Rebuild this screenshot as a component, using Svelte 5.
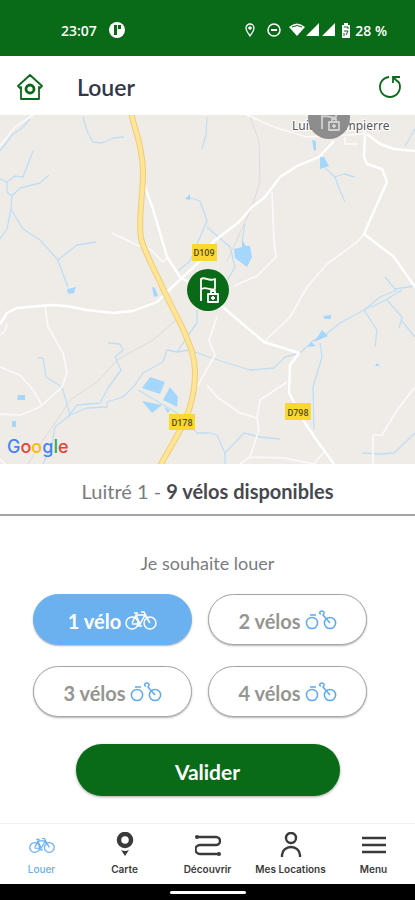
<script>
    let bikes = $state(1);
    let tab = $state("Louer");

    const options = [1, 2, 3, 4];
    const tabs = ["Louer", "Carte", "Découvrir", "Mes Locations", "Menu"];

    const streams = [
        "M30 4L21 14L13 19L0 36",
        "M83 2L87 16L93 27L102 28L113 23L124 22",
        "M33 36L23 62L15 61L7 67L0 64M7 67V77L12 81L20 73L40 68L49 60",
        "M12 81L11 94L23 114L40 125L58 145L60 151L68 172M11 94L7 114L0 124M58 145L77 130L96 127",
        "M207 2L206 20L202 34M188 82L200 86L207 106L197 129L190 146L178 156",
        "M207 112L230 132L235 152L227 166L216 176M245 109L242 127",
        "M324 52L335 62L340 76L345 87M335 62L344 59L355 62M415 14L405 31",
        "M197 195V208L187 222L177 237L167 235L163 247L143 258L135 270L123 282L107 287V292L87 293L70 300L55 312L52 330L43 349",
        "M177 237L190 235L203 240L227 248L250 255L274 253L285 242L300 238L314 225L325 220L340 208L364 195L380 182L397 175",
        "M364 195L382 187L402 175M385 162L395 174L415 171M364 195L377 215L375 232",
        "M387 185L402 202L399 213M402 206L415 222",
        "M320 228L322 242L313 272L314 315",
        "M207 317L217 320L225 338V349M225 338L244 318L260 322L280 324",
        "M415 318L394 338L380 339L362 338",
        "M38 243H43L46 262L62 272L70 300",
        "M108 228L120 229L123 235L115 242L121 255L108 273L100 288L77 290L68 302",
        "M138 275L177 298L197 318H208",
    ];

    const roads = [
        "M0 209L7 198L17 193L50 190L67 191L87 195L113 198L133 196L157 187L167 177L183 162L200 146L214 126L239 107L252 92L265 82L280 62L297 51L319 42L334 26",
        "M145 72L153 94L167 142L180 162L190 168L224 193L264 227L299 238L290 250L289 278L305 308L320 330L334 349",
        "M367 19L380 29L394 34L415 36",
        "M365 5V19L364 42L367 49L382 54L387 67L374 96L364 119L394 142L415 172",
    ];

    const lanes = [
        "M33 0L15 12L0 31",
        "M112 118L137 130L150 134L163 147L168 142",
        "M247 0L274 12L307 22L364 19",
        "M364 119L357 127L327 149L307 172L290 202L264 227",
        "M272 77L274 126L276 142L257 161L234 171",
        "M217 202L209 225L215 240L197 272M207 270L217 282L240 298L257 303",
        "M287 267L260 285L257 303L259 315L250 342L240 349M250 342L284 343L314 349L324 337",
        "M415 272L397 295L382 320H373V349M345 22V29H358",
        "M45 191L48 212L63 238L67 258L62 272L40 292L20 300L0 299",
        "M0 252L20 260L33 275L42 290M0 220L5 216L7 209M0 344L5 349",
    ];
</script>

{#snippet bike()}
    <svg class="bike" viewBox="0 0 32 20" aria-hidden="true">
        <circle cx="7" cy="13" r="6" />
        <circle cx="25" cy="13" r="6" />
        <path d="M7 13L11 5H20L15 14L11 5M15 14H7M25 13L19 2H16M9 3H13M20 5L25 13M13 16H17" />
    </svg>
{/snippet}

{#snippet partialBike()}
    <svg class="bike" viewBox="0 0 32 20" aria-hidden="true">
        <circle cx="7" cy="13" r="5.6" />
        <circle cx="25" cy="13" r="5.6" />
        <path d="M5 5H11M25 13L18 5C20 3 19 1 17 1C14 1 14 4 16 4" />
    </svg>
{/snippet}

{#snippet flag()}
    <path d="M-7 11V-11C-3 -14 0 -8 7 -11V-1C1 1 -2 -4 -6 -1" />
    <path d="M0 4H10V12H0ZM3 4V1H7V4M5 6V10M3 8H7" />
{/snippet}

<div class="app">
    <div class="status">
        <div class="status-group">
            <span>23:07</span>
            <svg width="16" height="16" viewBox="0 0 16 16" aria-hidden="true">
                <circle cx="8" cy="8" r="8" fill="#fff" />
                <path d="M5 3H8V13H5ZM9 3H12V7H9Z" fill="#096a17" />
            </svg>
        </div>
        <div class="status-group icons">
            <svg class="pin" width="10" height="14" viewBox="0 0 10 14" aria-hidden="true">
                <path d="M5 13C3 10 1 8 1 5A4 4 0 0 1 9 5C9 8 7 10 5 13ZM5 3V7M3 5H7" fill="none" stroke="#fff" stroke-width="1.3" />
            </svg>
            <svg class="dnd" width="14" height="14" viewBox="0 0 14 14" aria-hidden="true">
                <circle cx="7" cy="7" r="6" fill="none" stroke="#fff" stroke-width="1.5" />
                <path d="M4 7H10" stroke="#fff" stroke-width="2" />
            </svg>
            <svg width="46" height="14" viewBox="0 0 46 14" aria-hidden="true">
                <path d="M0 4Q8 -3 16 4L8 13Z" fill="#fff" />
                <path d="M3 4Q8 1 13 4" fill="none" stroke="#096a17" />
                <path d="M17 13L30 0V13ZM33 13L46 0V13Z" fill="#fff" />
            </svg>
            <svg class="battery" width="10" height="15" viewBox="0 0 10 15" aria-hidden="true">
                <path d="M3 0H7V2H9V15H1V2H3Z" fill="#fff" />
                <path d="M3 4H7V6M3 8H7L5 12M3 10V13" fill="none" stroke="#096a17" />
            </svg>
            <span>28 %</span>
        </div>
    </div>

    <header>
        <button class="icon-btn" aria-label="Accueil">
            <svg width="26" height="26" viewBox="0 0 26 26" fill="none" stroke="#096a17" aria-hidden="true">
                <path d="M1 12L13 1L25 12L23 14L22 13V25H4V13L3 14Z" stroke-width="1.8" stroke-linejoin="round" />
                <circle cx="13" cy="15" r="4" stroke-width="2.8" />
            </svg>
        </button>
        <h1>Louer</h1>
        <button class="icon-btn" aria-label="Actualiser">
            <svg width="24" height="24" viewBox="0 0 24 24" fill="none" stroke="#096a17" stroke-width="1.8" aria-hidden="true">
                <path d="M11 2A10 10 0 1 0 20 6" />
                <path d="M15 8V2H22M15 2L20 7" />
            </svg>
        </button>
    </header>

    <div class="map">
        <svg viewBox="0 0 415 349" preserveAspectRatio="xMidYMid slice" role="img" aria-label="Carte des stations">
            <g class="stream">
                {#each streams as d}<path {d} />{/each}
            </g>
            <path class="rail" d="M250 2L259 26L260 66L252 92L244 109L227 146M180 202L153 225L117 245L97 267L70 285L55 308L43 325L28 349" />
            <path
                class="water"
                d="M150 262L165 267L160 279L142 273ZM170 272L178 282L177 292L163 285ZM142 286L162 290L152 298ZM164 292L170 295L168 298ZM242 125L246 131L250 131L252 142L247 152L235 143L234 134L242 132ZM320 42L324 42L329 51L320 54ZM312 25L316 26L316 35L314 36ZM322 215L328 221L314 227ZM311 227L316 231L308 232ZM323 201L331 200V204L325 204ZM67 174L76 172L74 178L68 179ZM152 172L155 173L158 181L154 182ZM18 280L25 280V285H17ZM185 84L190 79L190 85ZM12 306H16V312H12ZM377 248L380 251H375Z"
            />
            <g class="lane">
                {#each lanes as d}<path {d} />{/each}
            </g>
            <g class="road">
                {#each roads as d}<path {d} />{/each}
            </g>
            {#each ["main-edge", "main"] as kind}
                <path
                    class={kind}
                    d="M131 -2C136 18 143 35 143 58C143 80 138 105 141 123C144 137 156 157 164 176L182 212C190 230 195 241 195 257C195 280 188 302 178 319C171 332 168 336 160 351"
                />
            {/each}

            <text class="town" x="292" y="15">Luitré-Dompierre</text>
            <g class="shield">
                <rect x="192" y="129" width="25" height="17" />
                <text x="204" y="141">D109</text>
                <rect x="169" y="299" width="26" height="16" />
                <text x="182" y="311">D178</text>
                <rect x="285" y="288" width="26" height="17" />
                <text x="298" y="301">D798</text>
            </g>

            <g class="marker" transform="translate(329 3)">
                <circle r="21" fill="#8d8d8d" />
                <g opacity="0.6">{@render flag()}</g>
            </g>
            <g class="marker" transform="translate(208 175)">
                <circle r="21" fill="#096a17" />
                {@render flag()}
            </g>
        </svg>
        <div class="google">
            <span class="b">G</span><span class="r">o</span><span class="y">o</span><span class="b">g</span><span class="g">l</span><span class="r">e</span>
        </div>
    </div>

    <p class="station">Luitré 1 - <strong>9 vélos disponibles</strong></p>

    <main>
        <h2>Je souhaite louer</h2>
        <div class="options">
            {#each options as n}
                <button
                    class="option"
                    class:selected={bikes === n}
                    aria-pressed={bikes === n}
                    onclick={() => (bikes = n)}
                >
                    <span>{n} {n > 1 ? "vélos" : "vélo"}</span>
                    {#if bikes === n}
                        {@render bike()}
                    {:else}
                        {@render partialBike()}
                    {/if}
                </button>
            {/each}
        </div>
        <button class="submit">Valider</button>
    </main>

    <nav>
        {#each tabs as name}
            <button class="tab" class:active={tab === name} onclick={() => (tab = name)}>
                {#if name === "Louer"}
                    {@render bike()}
                {:else if name === "Carte"}
                    <svg viewBox="0 0 26 26" aria-hidden="true">
                        <circle cx="13" cy="8" r="6" stroke-width="4.5" />
                        <path d="M9 18Q13 20 17 18L13 24Z" fill="currentColor" stroke="none" />
                    </svg>
                {:else if name === "Découvrir"}
                    <svg viewBox="0 0 26 26" aria-hidden="true">
                        <path d="M2 5H21A4 4 0 0 1 21 13H5A4 4 0 0 0 5 22H24" />
                        <circle cx="2" cy="5" r="2" fill="currentColor" stroke="none" />
                        <circle cx="24" cy="22" r="2" fill="currentColor" stroke="none" />
                    </svg>
                {:else if name === "Mes Locations"}
                    <svg viewBox="0 0 26 26" aria-hidden="true">
                        <circle cx="13" cy="6" r="5" />
                        <path d="M4 25V23A9 8 0 0 1 22 23V25" />
                    </svg>
                {:else}
                    <svg viewBox="0 0 26 26" aria-hidden="true">
                        <path d="M1 6H25M1 13H25M1 20H25" />
                    </svg>
                {/if}
                <span>{name}</span>
            </button>
        {/each}
    </nav>

    <div class="gesture"><div class="handle"></div></div>
</div>

<style>
    :global(body) {
        background: #fff;
    }

    .app {
        display: flex;
        flex-direction: column;
        min-height: 100vh;
        font-family: Lato, "Open Sans", sans-serif;
        color: #7b7b7f;
    }

    button {
        font-family: inherit;
        border: none;
        cursor: pointer;
    }

    .status {
        display: flex;
        justify-content: space-between;
        align-items: center;
        height: 56px;
        padding: 4px 28px 0 61px;
        box-sizing: border-box;
        background: #096a17;
        color: #fff;
        font: 600 14px "Open Sans", sans-serif;
    }

    .status-group {
        display: flex;
        align-items: center;
        gap: 12px;
    }

    .status-group.icons {
        gap: 4px;
    }

    .pin {
        margin-right: 8px;
    }

    .dnd {
        margin-right: 4px;
    }

    .battery {
        margin-left: 2px;
    }

    header {
        display: flex;
        align-items: center;
        height: 59px;
        padding: 2px 13px 0 17px;
        box-sizing: border-box;
    }

    .icon-btn {
        display: flex;
        padding: 0;
        background: none;
    }

    h1 {
        flex: 1;
        margin: 0 0 0 34px;
        font-size: 23px;
        font-weight: 600;
        line-height: 28px;
        color: #353747;
    }

    .map {
        position: relative;
        background: #efece8;
    }

    .map > svg {
        display: block;
        width: 100%;
        overflow: hidden;
    }

    .map path {
        fill: none;
        stroke-linejoin: round;
    }

    .stream path {
        stroke: #bfdef4;
        stroke-width: 1.3;
    }

    .map .rail {
        stroke: #dcdad8;
    }

    .map .water {
        fill: #a5d7fc;
    }

    .lane path {
        stroke: #fbfaf9;
        stroke-width: 1.6;
    }

    .road path {
        stroke: #fff;
        stroke-width: 2.4;
    }

    .main-edge {
        stroke: #f0cc77;
        stroke-width: 6;
    }

    .main {
        stroke: #ffe596;
        stroke-width: 4;
    }

    .town {
        font: 12px "Noto Sans", sans-serif;
        fill: #55555a;
        stroke: #fff;
        stroke-width: 2;
        paint-order: stroke;
    }

    .shield rect {
        fill: #fbd831;
    }

    .shield text {
        font: 500 9px Roboto, sans-serif;
        fill: #54491a;
        text-anchor: middle;
    }

    .marker path {
        stroke: #fff;
        stroke-width: 1.8;
    }

    .google {
        position: absolute;
        left: 7px;
        bottom: 7px;
        font: 500 18px/20px Inter, sans-serif;
    }

    .b {
        color: #4285f4;
    }

    .r {
        color: #ea4335;
    }

    .y {
        color: #fbbc05;
    }

    .g {
        color: #34a853;
    }

    .station {
        margin: 0;
        padding: 15px 0 11px;
        border-bottom: 2px solid #a3a3a3;
        text-align: center;
        font-size: 20px;
        line-height: 24px;
    }

    .station strong {
        color: #47484e;
    }

    main {
        flex: 1;
        padding: 35px 48px 0 33px;
        text-align: center;
    }

    h2 {
        margin: 0 0 19px 15px;
        font-size: 18px;
        font-weight: 400;
        line-height: 24px;
    }

    .options {
        display: grid;
        grid-template-columns: 1fr 1fr;
        gap: 21px 16px;
    }

    .option {
        display: flex;
        align-items: center;
        justify-content: center;
        gap: 4px;
        height: 51px;
        padding: 2px 0 0;
        border: 1px solid #a5a5a5;
        border-radius: 26px;
        background: #fff;
        box-shadow: 0 1px 2px rgba(0, 0, 0, 0.3);
        color: #959592;
        font-size: 20px;
        font-weight: 700;
    }

    .option .bike {
        margin-bottom: 2px;
        color: #5ba9f4;
    }

    .option.selected {
        border-color: #6bb1ef;
        background: #6bb1ef;
    }

    .option.selected,
    .option.selected .bike {
        color: #fff;
    }

    .bike {
        width: 32px;
        height: 20px;
        fill: none;
        stroke: currentColor;
        stroke-width: 1.5;
    }

    .submit {
        width: calc(100% - 70px);
        height: 52px;
        margin: 27px 0 0 15px;
        padding: 2px 0 0;
        border-radius: 26px;
        background: #096a17;
        box-shadow: 0 1px 3px rgba(0, 0, 0, 0.35);
        color: #fff;
        font-size: 21px;
        font-weight: 700;
    }

    nav {
        display: grid;
        grid-template-columns: repeat(5, 1fr);
        height: 61px;
        box-sizing: border-box;
        border-top: 1px solid #f0f0f0;
    }

    .tab {
        display: flex;
        flex-direction: column;
        align-items: center;
        padding: 8px 0 0;
        background: none;
        color: #3a3a3a;
        font-family: Inter, sans-serif;
        font-size: 10px;
        font-weight: 600;
        line-height: 14px;
        white-space: nowrap;
    }

    .tab svg {
        width: 26px;
        height: 26px;
        margin-bottom: 4px;
        fill: none;
        stroke: currentColor;
        stroke-width: 2.4;
    }

    .tab .bike {
        stroke-width: 1.5;
    }

    .tab.active {
        color: #65aff2;
        font-weight: 500;
    }

    .gesture {
        display: flex;
        justify-content: center;
        height: 16px;
        padding-top: 7px;
        box-sizing: border-box;
        background: #000;
    }

    .handle {
        width: 76px;
        height: 3px;
        border-radius: 2px;
        background: #fff;
    }
</style>
